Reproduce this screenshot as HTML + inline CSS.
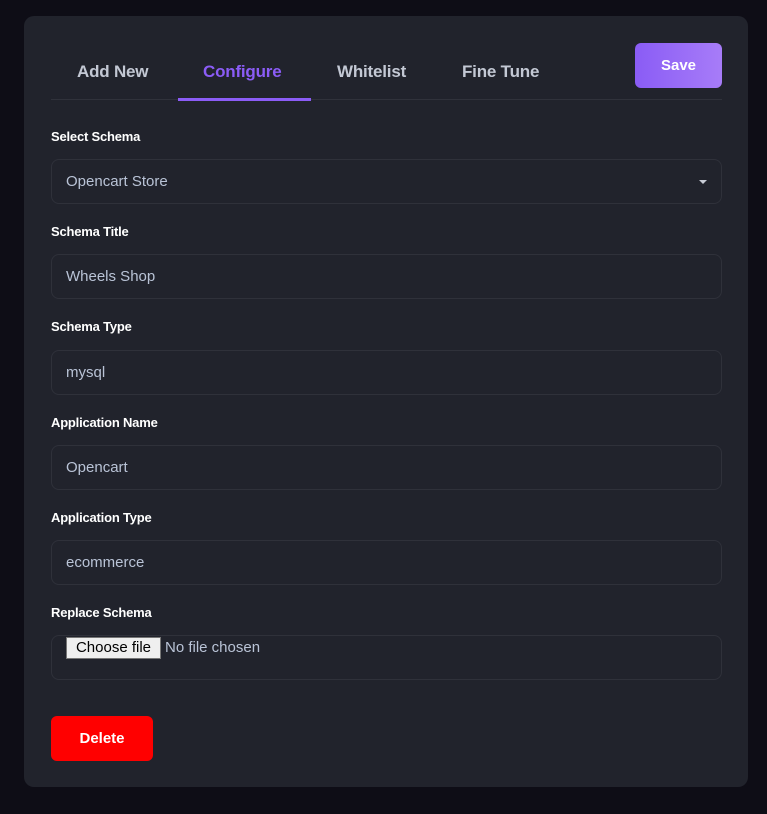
<!DOCTYPE html>
<html><head><meta charset="utf-8"><style>
*{box-sizing:border-box;margin:0;padding:0}
body{width:767px;height:814px;background:#0e0d16;font-family:"Liberation Sans",sans-serif;position:relative;overflow:hidden}
.card{position:absolute;left:24px;top:16px;width:724px;height:771px;background:#21232c;border-radius:10px}
.tab{position:absolute;top:62px;font-size:17px;color:#c3c8d4;font-weight:bold;letter-spacing:-0.2px}
.div{position:absolute;left:51px;top:99px;width:671px;height:1px;background:#30323b}
.ul{position:absolute;left:178px;top:98px;width:133px;height:3px;background:#8b5cf6}
.save{position:absolute;left:635px;top:43px;width:87px;height:45px;border-radius:6px;background:linear-gradient(90deg,#8a5cf5,#a77cf8);color:#fff;font-weight:bold;font-size:15px;text-align:center;line-height:45px}
.lbl{position:absolute;left:51px;font-size:13px;font-weight:bold;color:#fff;letter-spacing:-0.2px}
.inp{position:absolute;left:51px;width:671px;height:45px;border:1px solid #2f313a;border-radius:8px;color:#b9c3d6;font-size:15px;padding-left:14px;line-height:44px}
.arrow{position:absolute;right:14px;top:20px;width:0;height:0;border-left:4px solid transparent;border-right:4px solid transparent;border-top:4px solid #c8ccd6}
.fb{position:absolute;left:14px;top:1px;width:95px;text-align:center;background:#efefef;border:1px solid #767676;color:#000;font-size:15px;height:22px;line-height:20px}
.nf{position:absolute;left:113px;top:0;line-height:23px;color:#b9c3d6;font-size:15px}
.del{position:absolute;left:51px;top:716px;width:102px;height:45px;border-radius:6px;background:#ff0000;color:#fff;font-weight:bold;font-size:15px;text-align:center;line-height:45px}
</style></head><body>
<div class="card"></div>
<div class="tab" style="left:77px">Add New</div>
<div class="tab" style="left:203px;color:#8b5cf6">Configure</div>
<div class="tab" style="left:337px">Whitelist</div>
<div class="tab" style="left:462px">Fine Tune</div>
<div class="div"></div><div class="ul"></div>
<div class="save">Save</div>

<div class="lbl" style="top:129px">Select Schema</div>
<div class="inp" style="top:159px">Opencart Store<div class="arrow"></div></div>
<div class="lbl" style="top:224px">Schema Title</div>
<div class="inp" style="top:254px">Wheels Shop</div>
<div class="lbl" style="top:319px">Schema Type</div>
<div class="inp" style="top:350px">mysql</div>
<div class="lbl" style="top:415px">Application Name</div>
<div class="inp" style="top:445px">Opencart</div>
<div class="lbl" style="top:510px">Application Type</div>
<div class="inp" style="top:540px">ecommerce</div>
<div class="lbl" style="top:605px">Replace Schema</div>
<div class="inp" style="top:635px"><span class="fb">Choose file</span><span class="nf">No file chosen</span></div>
<div class="del">Delete</div>
</body></html>
